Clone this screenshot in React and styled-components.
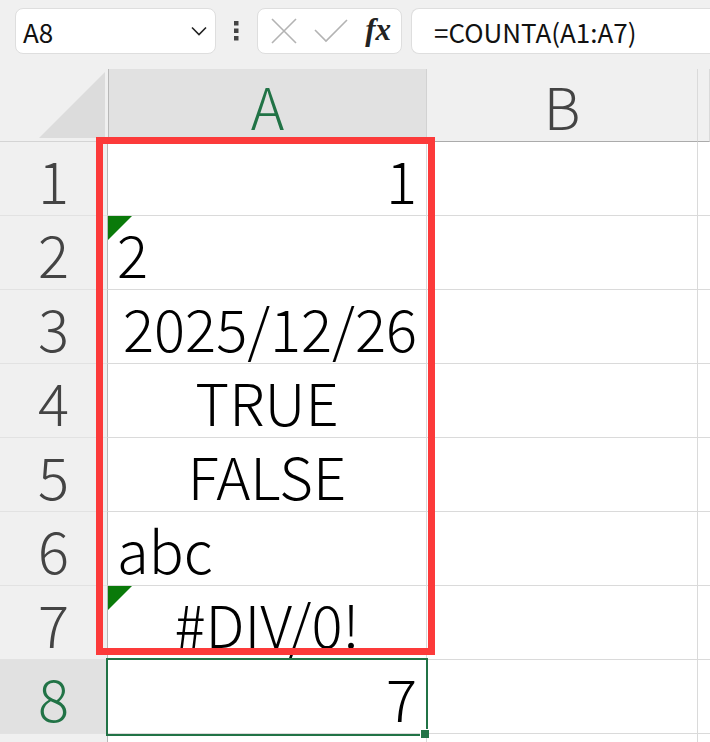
import React from "react";
import styled, { createGlobalStyle } from "styled-components";

const GlobalStyle = createGlobalStyle`
  html, body {
    margin: 0;
    padding: 0;
    background: #f0f0f0;
    overflow: hidden;
  }
  body {
    font-family: "Noto Sans CJK SC", "Noto Sans", sans-serif;
  }
`;

const Page = styled.div`
  width: 710px;
  height: 742px;
  display: flex;
  flex-direction: column;
  background: #f0f0f0;
`;

const Toolbar = styled.div`
  display: flex;
  align-items: center;
  height: 46px;
  padding: 8px 0 15px 15px;
`;

const Box = styled.div`
  box-sizing: border-box;
  height: 46px;
  background: #fff;
  border: 1px solid #dedede;
  border-radius: 8px;
  display: flex;
  align-items: center;
`;

const NameBox = styled(Box)`
  width: 201px;
  padding: 0 8px 0 7px;
  justify-content: space-between;
  font-size: 26px;
  color: #111;
`;

const Dots = styled.div`
  width: 41px;
  display: flex;
  justify-content: center;
`;

const FxBox = styled(Box)`
  width: 145px;
  padding: 0 10px 0 13px;
  justify-content: space-between;
  margin-right: 9px;
`;

const Fx = styled.span`
  font-family: "Liberation Serif", serif;
  font-style: italic;
  font-weight: bold;
  font-size: 31px;
  color: #222;
  line-height: 1;
  padding-bottom: 4px;
`;

const FormulaBox = styled(Box)`
  flex: 1;
  border-right: none;
  border-radius: 8px 0 0 8px;
  padding-left: 22px;
  font-size: 26px;
  color: #111;
`;

const GridWrap = styled.div`
  position: relative;
`;

const Grid = styled.div`
  display: grid;
  grid-template-columns: 108px 319px 271px 12px;
  grid-template-rows: 73px repeat(8, 74px) 30px;
  font-weight: 300;
`;

const Corner = styled.div`
  position: relative;
  border-bottom: 1px solid #d4d4d4;
  box-sizing: border-box;
  &::after {
    content: "";
    position: absolute;
    right: 3px;
    bottom: 3px;
    width: 0;
    height: 0;
    border-left: 66px solid transparent;
    border-bottom: 66px solid #dcdcdc;
  }
`;

const ColHead = styled.div`
  box-sizing: border-box;
  background: ${(p) => (p.$active ? "#e1e1e1" : "#f0f0f0")};
  color: ${(p) => (p.$active ? "#217346" : "#444")};
  border-bottom: 1px solid #ababab;
  border-right: 1px solid ${(p) => (p.$active ? "#d2d2d2" : "#dadada")};
  border-left: ${(p) => (p.$first ? "1px solid #b8b8b8" : "none")};
  display: flex;
  align-items: flex-end;
  justify-content: center;
  font-size: 57px;
  line-height: 1;
  padding-bottom: 7px;
`;

const RowHead = styled.div`
  box-sizing: border-box;
  background: ${(p) => (p.$active ? "#e1e1e1" : "#f0f0f0")};
  color: ${(p) => (p.$active ? "#217346" : "#444")};
  border-bottom: 1px solid #e2e2e2;
  border-right: 1px solid #b8b8b8;
  display: flex;
  align-items: flex-end;
  justify-content: center;
  font-size: 58px;
  line-height: 1;
  padding-bottom: 7px;
`;

const Cell = styled.div`
  position: relative;
  box-sizing: border-box;
  background: #fff;
  border-bottom: 1px solid #dadada;
  border-right: 1px solid #dadada;
  display: flex;
  align-items: flex-end;
  justify-content: ${(p) =>
    p.$align === "right" ? "flex-end" : p.$align === "center" ? "center" : "flex-start"};
  padding: 0 9px 7px 9px;
  font-size: 58px;
  line-height: 1;
  color: #000;
  white-space: nowrap;
`;

const ErrorFlag = styled.span`
  position: absolute;
  top: 0;
  left: 0;
  width: 0;
  height: 0;
  border-top: 24px solid #0a7a0a;
  border-right: 24px solid transparent;
`;

const Highlight = styled.div`
  position: absolute;
  left: 96px;
  top: 68px;
  width: 339px;
  height: 518px;
  box-sizing: border-box;
  border: 7px solid #fc3a3a;
  pointer-events: none;
`;

const Selection = styled.div`
  position: absolute;
  left: 106px;
  top: 589px;
  width: 322px;
  height: 78px;
  box-sizing: border-box;
  border: 2px solid #217346;
  pointer-events: none;
`;

const FillHandle = styled.span`
  position: absolute;
  right: -3px;
  bottom: -4px;
  width: 8px;
  height: 8px;
  background: #217346;
  border: 1px solid #fff;
  border-right: none;
  border-bottom: none;
`;

const rows = [
  { n: 1, v: "1", align: "right" },
  { n: 2, v: "2", align: "left", flag: true },
  { n: 3, v: "2025/12/26", align: "right" },
  { n: 4, v: "TRUE", align: "center" },
  { n: 5, v: "FALSE", align: "center" },
  { n: 6, v: "abc", align: "left" },
  { n: 7, v: "#DIV/0!", align: "center", flag: true },
  { n: 8, v: "7", align: "right", active: true },
];

const Chevron = () => (
  <svg width="16" height="10" viewBox="0 0 16 10">
    <path d="M1 1.5 L8 8.5 L15 1.5" fill="none" stroke="#222" strokeWidth="1.6" />
  </svg>
);

const VDots = () => (
  <svg width="5" height="20" viewBox="0 0 5 20">
    <rect x="0" y="0" width="4.5" height="4.5" fill="#444" />
    <rect x="0" y="7.5" width="4.5" height="4.5" fill="#444" />
    <rect x="0" y="15" width="4.5" height="4.5" fill="#444" />
  </svg>
);

const Cross = () => (
  <svg width="26" height="26" viewBox="0 0 26 26">
    <path d="M1 1 L25 25 M25 1 L1 25" stroke="#b3b3b3" strokeWidth="1.6" fill="none" />
  </svg>
);

const Check = () => (
  <svg width="34" height="24" viewBox="0 0 34 24">
    <path d="M1 11 L12 22 L33 1" stroke="#b3b3b3" strokeWidth="1.6" fill="none" />
  </svg>
);

export default function App() {
  return (
    <Page>
      <GlobalStyle />
      <Toolbar>
        <NameBox>
          <span>A8</span>
          <Chevron />
        </NameBox>
        <Dots>
          <VDots />
        </Dots>
        <FxBox>
          <Cross />
          <Check />
          <Fx>fx</Fx>
        </FxBox>
        <FormulaBox>=COUNTA(A1:A7)</FormulaBox>
      </Toolbar>
      <GridWrap>
        <Grid>
          <Corner />
          <ColHead $active $first>A</ColHead>
          <ColHead>B</ColHead>
          <ColHead />
          {rows.map((r) => (
            <React.Fragment key={r.n}>
              <RowHead $active={r.active}>{r.n}</RowHead>
              <Cell $align={r.align}>
                {r.flag && <ErrorFlag />}
                {r.v}
              </Cell>
              <Cell />
              <Cell />
            </React.Fragment>
          ))}
          <RowHead />
          <Cell />
          <Cell />
          <Cell />
        </Grid>
        <Highlight />
        <Selection>
          <FillHandle />
        </Selection>
      </GridWrap>
    </Page>
  );
}
